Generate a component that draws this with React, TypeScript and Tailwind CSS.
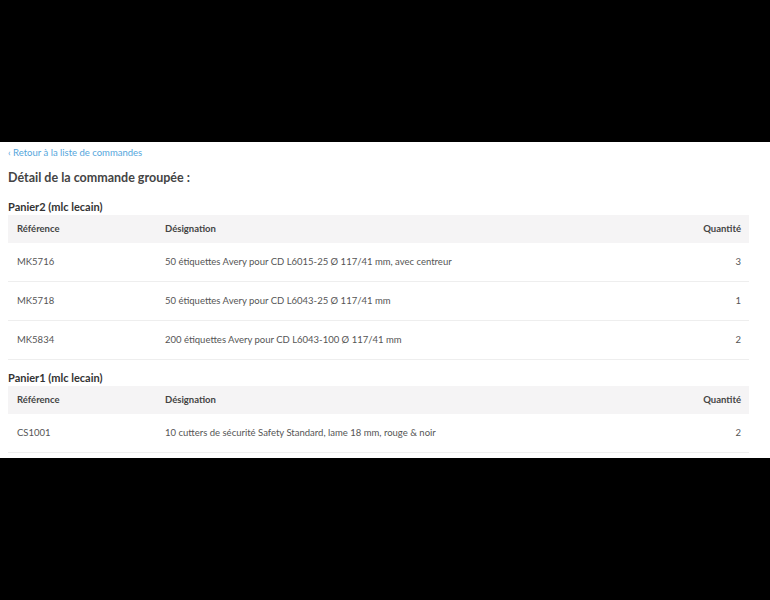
type Line = { ref: string; label: string; qty: number };

const paniers: { name: string; lines: Line[] }[] = [
  {
    name: "Panier2 (mlc lecain)",
    lines: [
      { ref: "MK5716", label: "50 étiquettes Avery pour CD L6015-25 Ø 117/41 mm, avec centreur", qty: 3 },
      { ref: "MK5718", label: "50 étiquettes Avery pour CD L6043-25 Ø 117/41 mm", qty: 1 },
      { ref: "MK5834", label: "200 étiquettes Avery pour CD L6043-100 Ø 117/41 mm", qty: 2 },
    ],
  },
  {
    name: "Panier1 (mlc lecain)",
    lines: [
      { ref: "CS1001", label: "10 cutters de sécurité Safety Standard, lame 18 mm, rouge & noir", qty: 2 },
    ],
  },
];

const Panier = ({ name, lines }: { name: string; lines: Line[] }) => (
  <div>
    <h3 className="text-[11px] font-bold leading-[14px] text-[#333] mb-[1px] pt-[1px]">{name}</h3>
    <div className="w-[741px]">
      <div className="grid grid-cols-[157px_1fr_120px] h-[28px] pt-[1px] items-center bg-[#f5f4f5] text-[9.5px] font-bold text-[#444]">
        <span className="pl-[9px]">Référence</span>
        <span>Désignation</span>
        <span className="text-right pr-[8px]">Quantité</span>
      </div>
      {lines.map((l) => (
        <div
          key={l.ref}
          className="grid grid-cols-[157px_1fr_120px] h-[39px] pt-[1px] items-center border-b border-[#eeeeee] text-[9.5px] text-[#555]"
        >
          <span className="pl-[9px]">{l.ref}</span>
          <span>{l.label}</span>
          <span className="text-right pr-[8px]">{l.qty}</span>
        </div>
      ))}
    </div>
  </div>
);

export default function App() {
  return (
    <div className="min-h-[600px] bg-black" style={{ fontFamily: "Lato, 'Open Sans', sans-serif" }}>
      <div className="h-[142px]" />
      <div className="bg-white px-[8px] pt-[4px] h-[316px]">
        <a className="block text-[9.5px] leading-[14px] text-[#55a6dc] cursor-pointer">
          ‹ Retour à la liste de commandes
        </a>
        <h2 className="mt-[9px] text-[12.5px] font-bold leading-[18px] text-[#444]">
          Détail de la commande groupée :
        </h2>
        <div className="mt-[12px] flex flex-col gap-[10px]">
          {paniers.map((p) => (
            <Panier key={p.name} name={p.name} lines={p.lines} />
          ))}
        </div>
      </div>
    </div>
  );
}
